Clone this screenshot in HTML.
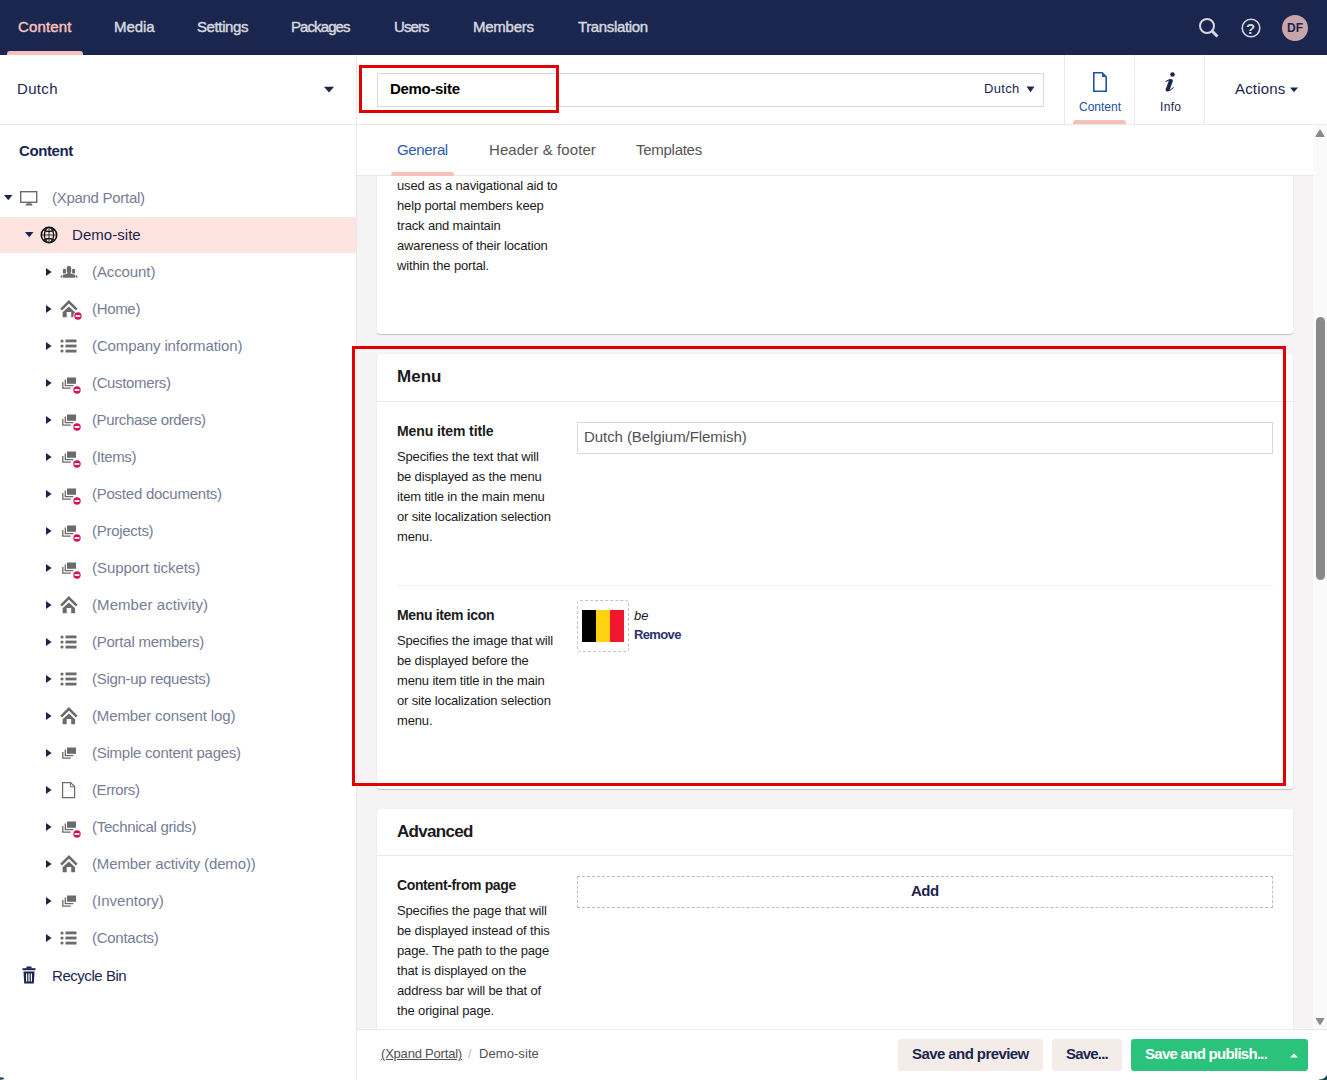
<!DOCTYPE html>
<html><head><meta charset="utf-8"><title>Umbraco</title>
<style>
html,body{margin:0;padding:0;}
body{width:1327px;height:1080px;overflow:hidden;position:relative;background:#fff;font-family:'Liberation Sans', sans-serif;}
</style></head><body>
<div style="position:absolute;left:357px;top:125px;width:956px;height:904px;background:#f5f3f4"></div>
<div style="position:absolute;left:1313px;top:125px;width:14px;height:904px;background:#fafafa"></div>
<svg style="position:absolute;left:1313px;top:125px" width="14" height="14"><path d="M3 11.5 L7 5 L11 11.5 Z" fill="#8a8a8a" stroke="#8a8a8a" stroke-width="1.2" stroke-linejoin="round"/></svg>
<svg style="position:absolute;left:1313px;top:1015px" width="14" height="14"><path d="M3.4 3.6 L10.6 3.6 L7 9.4 Z" fill="#8a8a8a" stroke="#8a8a8a" stroke-width="1.2" stroke-linejoin="round"/></svg>
<div style="position:absolute;left:1316px;top:317px;width:9px;height:263px;background:#8a8a8a;border-radius:4.5px"></div>
<div style="position:absolute;left:377px;top:120px;width:916px;height:214px;background:#fff;border-radius:3px;box-shadow:0 1px 1px rgba(0,0,0,0.2),0 0 1px rgba(0,0,0,0.1)"></div>
<div style="position:absolute;left:377px;top:354px;width:916px;height:435px;background:#fff;border-radius:3px;box-shadow:0 1px 1px rgba(0,0,0,0.2),0 0 1px rgba(0,0,0,0.1)"></div>
<div style="position:absolute;left:377px;top:401px;width:916px;height:1px;background:#e9e9eb"></div>
<div style="position:absolute;left:377px;top:809px;width:916px;height:400px;background:#fff;border-radius:3px;box-shadow:0 1px 1px rgba(0,0,0,0.2),0 0 1px rgba(0,0,0,0.1)"></div>
<div style="position:absolute;left:377px;top:855px;width:916px;height:1px;background:#e9e9eb"></div>
<div style="position:absolute;left:397px;top:176px;line-height:20px;white-space:nowrap;font-size:13px;font-weight:normal;font-style:normal;color:#1b1b1b;letter-spacing:-0.15px;">used as a navigational aid to</div>
<div style="position:absolute;left:397px;top:196px;line-height:20px;white-space:nowrap;font-size:13px;font-weight:normal;font-style:normal;color:#1b1b1b;letter-spacing:-0.15px;">help portal members keep</div>
<div style="position:absolute;left:397px;top:216px;line-height:20px;white-space:nowrap;font-size:13px;font-weight:normal;font-style:normal;color:#1b1b1b;letter-spacing:-0.15px;">track and maintain</div>
<div style="position:absolute;left:397px;top:236px;line-height:20px;white-space:nowrap;font-size:13px;font-weight:normal;font-style:normal;color:#1b1b1b;letter-spacing:-0.15px;">awareness of their location</div>
<div style="position:absolute;left:397px;top:256px;line-height:20px;white-space:nowrap;font-size:13px;font-weight:normal;font-style:normal;color:#1b1b1b;letter-spacing:-0.15px;">within the portal.</div>
<div style="position:absolute;left:397px;top:367px;line-height:20px;white-space:nowrap;font-size:17px;font-weight:bold;font-style:normal;color:#1b1b1b;letter-spacing:0.036px;">Menu</div>
<div style="position:absolute;left:397px;top:421px;line-height:20px;white-space:nowrap;font-size:14px;font-weight:bold;font-style:normal;color:#1b1b1b;letter-spacing:-0.101px;">Menu item title</div>
<div style="position:absolute;left:397px;top:447px;line-height:20px;white-space:nowrap;font-size:13px;font-weight:normal;font-style:normal;color:#1b1b1b;letter-spacing:-0.15px;">Specifies the text that will</div>
<div style="position:absolute;left:397px;top:467px;line-height:20px;white-space:nowrap;font-size:13px;font-weight:normal;font-style:normal;color:#1b1b1b;letter-spacing:-0.15px;">be displayed as the menu</div>
<div style="position:absolute;left:397px;top:487px;line-height:20px;white-space:nowrap;font-size:13px;font-weight:normal;font-style:normal;color:#1b1b1b;letter-spacing:-0.15px;">item title in the main menu</div>
<div style="position:absolute;left:397px;top:507px;line-height:20px;white-space:nowrap;font-size:13px;font-weight:normal;font-style:normal;color:#1b1b1b;letter-spacing:-0.15px;">or site localization selection</div>
<div style="position:absolute;left:397px;top:527px;line-height:20px;white-space:nowrap;font-size:13px;font-weight:normal;font-style:normal;color:#1b1b1b;letter-spacing:-0.15px;">menu.</div>
<div style="position:absolute;left:577px;top:422px;width:696px;height:32px;border:1px solid #d8d7d9;box-sizing:border-box;background:#fff"></div>
<div style="position:absolute;left:584px;top:427px;line-height:20px;white-space:nowrap;font-size:15px;font-weight:normal;font-style:normal;color:#515054;letter-spacing:-0.069px;">Dutch (Belgium/Flemish)</div>
<div style="position:absolute;left:397px;top:585px;width:876px;height:1px;background:#f0f0f1"></div>
<div style="position:absolute;left:397px;top:605px;line-height:20px;white-space:nowrap;font-size:14px;font-weight:bold;font-style:normal;color:#1b1b1b;letter-spacing:-0.339px;">Menu item icon</div>
<div style="position:absolute;left:397px;top:631px;line-height:20px;white-space:nowrap;font-size:13px;font-weight:normal;font-style:normal;color:#1b1b1b;letter-spacing:-0.15px;">Specifies the image that will</div>
<div style="position:absolute;left:397px;top:651px;line-height:20px;white-space:nowrap;font-size:13px;font-weight:normal;font-style:normal;color:#1b1b1b;letter-spacing:-0.15px;">be displayed before the</div>
<div style="position:absolute;left:397px;top:671px;line-height:20px;white-space:nowrap;font-size:13px;font-weight:normal;font-style:normal;color:#1b1b1b;letter-spacing:-0.15px;">menu item title in the main</div>
<div style="position:absolute;left:397px;top:691px;line-height:20px;white-space:nowrap;font-size:13px;font-weight:normal;font-style:normal;color:#1b1b1b;letter-spacing:-0.15px;">or site localization selection</div>
<div style="position:absolute;left:397px;top:711px;line-height:20px;white-space:nowrap;font-size:13px;font-weight:normal;font-style:normal;color:#1b1b1b;letter-spacing:-0.15px;">menu.</div>
<div style="position:absolute;left:577px;top:600px;width:52px;height:52px;border:1px dashed #c4c4c8;box-sizing:border-box;border-radius:3px"></div>
<div style="position:absolute;left:582px;top:610px;width:14px;height:32px;background:#000"></div>
<div style="position:absolute;left:596px;top:610px;width:14px;height:32px;background:#fdd30f"></div>
<div style="position:absolute;left:610px;top:610px;width:14px;height:32px;background:#f1172f"></div>
<div style="position:absolute;left:634px;top:606px;line-height:20px;white-space:nowrap;font-size:13px;font-weight:normal;font-style:italic;color:#1b1b1b;">be</div>
<div style="position:absolute;left:634px;top:625px;line-height:20px;white-space:nowrap;font-size:13px;font-weight:bold;font-style:normal;color:#27336a;letter-spacing:-0.636px;">Remove</div>
<div style="position:absolute;left:397px;top:822px;line-height:20px;white-space:nowrap;font-size:17px;font-weight:bold;font-style:normal;color:#1b1b1b;letter-spacing:-0.679px;">Advanced</div>
<div style="position:absolute;left:397px;top:875px;line-height:20px;white-space:nowrap;font-size:14px;font-weight:bold;font-style:normal;color:#1b1b1b;letter-spacing:-0.376px;">Content-from page</div>
<div style="position:absolute;left:397px;top:901px;line-height:20px;white-space:nowrap;font-size:13px;font-weight:normal;font-style:normal;color:#1b1b1b;letter-spacing:-0.15px;">Specifies the page that will</div>
<div style="position:absolute;left:397px;top:921px;line-height:20px;white-space:nowrap;font-size:13px;font-weight:normal;font-style:normal;color:#1b1b1b;letter-spacing:-0.15px;">be displayed instead of this</div>
<div style="position:absolute;left:397px;top:941px;line-height:20px;white-space:nowrap;font-size:13px;font-weight:normal;font-style:normal;color:#1b1b1b;letter-spacing:-0.15px;">page. The path to the page</div>
<div style="position:absolute;left:397px;top:961px;line-height:20px;white-space:nowrap;font-size:13px;font-weight:normal;font-style:normal;color:#1b1b1b;letter-spacing:-0.15px;">that is displayed on the</div>
<div style="position:absolute;left:397px;top:981px;line-height:20px;white-space:nowrap;font-size:13px;font-weight:normal;font-style:normal;color:#1b1b1b;letter-spacing:-0.15px;">address bar will be that of</div>
<div style="position:absolute;left:397px;top:1001px;line-height:20px;white-space:nowrap;font-size:13px;font-weight:normal;font-style:normal;color:#1b1b1b;letter-spacing:-0.15px;">the original page.</div>
<div style="position:absolute;left:577px;top:876px;width:696px;height:32px;border:1px dashed #bdbdc2;box-sizing:border-box"></div>
<div style="position:absolute;left:911px;top:881px;line-height:20px;white-space:nowrap;font-size:15px;font-weight:bold;font-style:normal;color:#1b264f;letter-spacing:-0.536px;">Add</div>
<div style="position:absolute;left:357px;top:125px;width:956px;height:50px;background:#fff"></div>
<div style="position:absolute;left:357px;top:175px;width:956px;height:1px;background:#e9e9eb"></div>
<div style="position:absolute;left:397px;top:140px;line-height:20px;white-space:nowrap;font-size:15px;font-weight:normal;font-style:normal;color:#2e5aac;letter-spacing:-0.362px;">General</div>
<div style="position:absolute;left:391px;top:172px;width:63px;height:4px;background:#f5c1bc;border-radius:3px 3px 0 0"></div>
<div style="position:absolute;left:489px;top:140px;line-height:20px;white-space:nowrap;font-size:15px;font-weight:normal;font-style:normal;color:#555;letter-spacing:0.064px;">Header &amp; footer</div>
<div style="position:absolute;left:636px;top:140px;line-height:20px;white-space:nowrap;font-size:15px;font-weight:normal;font-style:normal;color:#555;letter-spacing:-0.272px;">Templates</div>
<div style="position:absolute;left:357px;top:1029px;width:970px;height:51px;background:#fff"></div>
<div style="position:absolute;left:357px;top:1029px;width:970px;height:1px;background:#e9e9eb"></div>
<div style="position:absolute;left:381px;top:1044px;line-height:20px;white-space:nowrap;font-size:13px;font-weight:normal;font-style:normal;color:#515054;text-decoration:underline;letter-spacing:-0.202px;">(Xpand Portal)</div>
<div style="position:absolute;left:468px;top:1044px;line-height:20px;white-space:nowrap;font-size:13px;font-weight:normal;font-style:normal;color:#bbb;">/</div>
<div style="position:absolute;left:479px;top:1044px;line-height:20px;white-space:nowrap;font-size:13px;font-weight:normal;font-style:normal;color:#515054;letter-spacing:0.069px;">Demo-site</div>
<div style="position:absolute;left:898px;top:1039px;width:145px;height:32px;background:#f3ece8;border-radius:3px"></div>
<div style="position:absolute;left:912px;top:1044px;line-height:20px;white-space:nowrap;font-size:15px;font-weight:bold;font-style:normal;color:#1b264f;letter-spacing:-0.574px;">Save and preview</div>
<div style="position:absolute;left:1052px;top:1039px;width:70px;height:32px;background:#f3ece8;border-radius:3px"></div>
<div style="position:absolute;left:1066px;top:1044px;line-height:20px;white-space:nowrap;font-size:15px;font-weight:bold;font-style:normal;color:#1b264f;letter-spacing:-0.808px;">Save...</div>
<div style="position:absolute;left:1131px;top:1039px;width:177px;height:32px;background:#2bc37c;border-radius:3px"></div>
<div style="position:absolute;left:1145px;top:1044px;line-height:20px;white-space:nowrap;font-size:15px;font-weight:bold;font-style:normal;color:#fff;letter-spacing:-0.715px;">Save and publish...</div>
<svg style="position:absolute;left:1289px;top:1052px" width="10" height="6"><path d="M1 5.5 L5 1.5 L9 5.5 Z" fill="#fff"/></svg>
<div style="position:absolute;left:0px;top:0px;width:1327px;height:55px;background:#1b264f"></div>
<div style="position:absolute;left:18px;top:17px;line-height:20px;white-space:nowrap;font-size:15px;font-weight:normal;font-style:normal;color:#f5c1bc;-webkit-text-stroke:0.45px currentColor;letter-spacing:0.159px;">Content</div>
<div style="position:absolute;left:114px;top:17px;line-height:20px;white-space:nowrap;font-size:15px;font-weight:normal;font-style:normal;color:#d5d6df;-webkit-text-stroke:0.45px currentColor;letter-spacing:-0.090px;">Media</div>
<div style="position:absolute;left:197px;top:17px;line-height:20px;white-space:nowrap;font-size:15px;font-weight:normal;font-style:normal;color:#d5d6df;-webkit-text-stroke:0.45px currentColor;letter-spacing:-0.386px;">Settings</div>
<div style="position:absolute;left:291px;top:17px;line-height:20px;white-space:nowrap;font-size:15px;font-weight:normal;font-style:normal;color:#d5d6df;-webkit-text-stroke:0.45px currentColor;letter-spacing:-0.911px;">Packages</div>
<div style="position:absolute;left:394px;top:17px;line-height:20px;white-space:nowrap;font-size:15px;font-weight:normal;font-style:normal;color:#d5d6df;-webkit-text-stroke:0.45px currentColor;letter-spacing:-0.918px;">Users</div>
<div style="position:absolute;left:473px;top:17px;line-height:20px;white-space:nowrap;font-size:15px;font-weight:normal;font-style:normal;color:#d5d6df;-webkit-text-stroke:0.45px currentColor;letter-spacing:-0.253px;">Members</div>
<div style="position:absolute;left:578px;top:17px;line-height:20px;white-space:nowrap;font-size:15px;font-weight:normal;font-style:normal;color:#d5d6df;-webkit-text-stroke:0.45px currentColor;letter-spacing:-0.366px;">Translation</div>
<div style="position:absolute;left:7px;top:51px;width:76px;height:4px;background:#f5c1bc;border-radius:3px 3px 0 0"></div>
<svg style="position:absolute;left:1196px;top:15px" width="26" height="26"><circle cx="11" cy="11" r="7" fill="none" stroke="#d5d6df" stroke-width="2"/><path d="M16 16 L21.5 21.5" stroke="#d5d6df" stroke-width="3" stroke-linecap="butt"/></svg>
<svg style="position:absolute;left:1240px;top:17px" width="22" height="22"><circle cx="11" cy="11" r="8.8" fill="none" stroke="#d5d6df" stroke-width="1.6"/></svg>
<div style="position:absolute;left:1246px;top:19px;line-height:20px;white-space:nowrap;font-size:15px;font-weight:bold;font-style:normal;color:#d5d6df;">?</div>
<div style="position:absolute;left:1282px;top:15px;width:26px;height:26px;background:#c9a4a8;border-radius:50%"></div>
<div style="position:absolute;left:1287px;top:18px;line-height:20px;white-space:nowrap;font-size:12px;font-weight:bold;font-style:normal;color:#1b264f;letter-spacing:0.000px;">DF</div>
<div style="position:absolute;left:357px;top:55px;width:970px;height:69px;background:#fff"></div>
<div style="position:absolute;left:357px;top:124px;width:970px;height:1px;background:#e9e9eb"></div>
<div style="position:absolute;left:377px;top:73px;width:667px;height:34px;border:1px solid #d8d7d9;box-sizing:border-box"></div>
<div style="position:absolute;left:390px;top:79px;line-height:20px;white-space:nowrap;font-size:15px;font-weight:bold;font-style:normal;color:#000;letter-spacing:-0.316px;">Demo-site</div>
<div style="position:absolute;left:984px;top:79px;line-height:20px;white-space:nowrap;font-size:13px;font-weight:normal;font-style:normal;color:#1b264f;letter-spacing:0.308px;">Dutch</div>
<svg style="position:absolute;left:1026px;top:86px" width="9" height="7"><path d="M0.5 0.5 L8.5 0.5 L4.5 6.3 Z" fill="#1b264f"/></svg>
<div style="position:absolute;left:1064px;top:55px;width:1px;height:69px;background:#e9e9eb"></div>
<div style="position:absolute;left:1134px;top:55px;width:1px;height:69px;background:#e9e9eb"></div>
<div style="position:absolute;left:1204px;top:55px;width:1px;height:69px;background:#e9e9eb"></div>
<svg style="position:absolute;left:1092px;top:71px" width="16" height="22"><path d="M1.8 1.8 H10.2 L14.2 5.8 V20.2 H1.8 Z" fill="none" stroke="#2152a3" stroke-width="1.6" stroke-linejoin="miter"/><path d="M10 2 L10 6 L14 6 Z" fill="#2152a3"/></svg>
<div style="position:absolute;left:1079px;top:97px;line-height:20px;white-space:nowrap;font-size:12px;font-weight:normal;font-style:normal;color:#2152a3;letter-spacing:-0.005px;">Content</div>
<div style="position:absolute;left:1073px;top:120px;width:53px;height:4px;background:#f5c1bc;border-radius:3px 3px 0 0"></div>
<svg style="position:absolute;left:1158px;top:68px" width="24" height="28"><circle cx="14.5" cy="6.5" r="2.3" fill="#1b264f"/><path d="M7.2 13.8 C8.6 12.2 10.3 11 12.8 10.9 C14.6 10.9 15.1 12 14.7 13.4 L11.6 21.9 L15.6 19.1 L16 19.5 C13.8 21.9 11.6 23.4 9.2 23.4 C7.8 23.4 7.4 22.4 7.7 21.3 L10.9 12.6 L7.5 14.2 Z" fill="#1b264f"/></svg>
<div style="position:absolute;left:1160px;top:97px;line-height:20px;white-space:nowrap;font-size:12px;font-weight:normal;font-style:normal;color:#1b264f;letter-spacing:0.328px;">Info</div>
<div style="position:absolute;left:1235px;top:79px;line-height:20px;white-space:nowrap;font-size:15px;font-weight:normal;font-style:normal;color:#1b264f;letter-spacing:0.183px;">Actions</div>
<svg style="position:absolute;left:1290px;top:87px" width="8" height="6"><path d="M0 0.5 L8 0.5 L4 5.3 Z" fill="#1b264f"/></svg>
<div style="position:absolute;left:0px;top:55px;width:356px;height:1025px;background:#fff"></div>
<div style="position:absolute;left:356px;top:55px;width:1px;height:1025px;background:#e9e9eb"></div>
<div style="position:absolute;left:0px;top:124px;width:356px;height:1px;background:#e9e9eb"></div>
<div style="position:absolute;left:17px;top:79px;line-height:20px;white-space:nowrap;font-size:15px;font-weight:normal;font-style:normal;color:#1b264f;letter-spacing:0.328px;">Dutch</div>
<svg style="position:absolute;left:324px;top:86px" width="10" height="7"><path d="M0 0.8 L10 0.8 L5 6.5 Z" fill="#1b264f"/></svg>
<div style="position:absolute;left:19px;top:141px;line-height:20px;white-space:nowrap;font-size:15px;font-weight:bold;font-style:normal;color:#1b264f;letter-spacing:-0.409px;">Content</div>
<svg style="position:absolute;left:4px;top:195px" width="9" height="6"><path d="M0 0 L8.5 0 L4.25 5.2 Z" fill="#1b264f"/></svg>
<svg style="position:absolute;left:20px;top:191px" width="18" height="15"><rect x="0.7" y="0.7" width="16" height="10.6" fill="none" stroke="#6b6b6b" stroke-width="1.4"/><path d="M5.2 14.6 L6.8 12.2 H11.2 L12.8 14.6 Z" fill="#6b6b6b"/></svg>
<div style="position:absolute;left:52px;top:188px;line-height:20px;white-space:nowrap;font-size:15px;font-weight:normal;font-style:normal;color:#767d95;letter-spacing:-0.286px;">(Xpand Portal)</div>
<div style="position:absolute;left:0px;top:217px;width:356px;height:36px;background:#fde4e1"></div>
<svg style="position:absolute;left:25px;top:232px" width="9" height="6"><path d="M0 0 L8.5 0 L4.25 5.2 Z" fill="#1b264f"/></svg>
<svg style="position:absolute;left:40px;top:226px" width="18" height="18"><circle cx="9" cy="9" r="7.7" fill="none" stroke="#111" stroke-width="1.6"/><ellipse cx="9" cy="9" rx="4.6" ry="7.7" fill="none" stroke="#111" stroke-width="1.3"/><path d="M9 1.4 V16.6 M1.6 9 H16.4" stroke="#222" stroke-width="0.9"/><path d="M3.6 3.4 Q9 7.6 14.4 3.4 M3.6 14.6 Q9 10.4 14.4 14.6" fill="none" stroke="#111" stroke-width="1.3"/></svg>
<div style="position:absolute;left:72px;top:225px;line-height:20px;white-space:nowrap;font-size:15px;font-weight:normal;font-style:normal;color:#1b264f;letter-spacing:0.043px;">Demo-site</div>
<svg style="position:absolute;left:46px;top:268px" width="6" height="9"><path d="M0 0 L5.6 4 L0 8 Z" fill="#1b264f"/></svg>
<svg style="position:absolute;left:60px;top:266px" width="18" height="13"><rect x="6.8" y="0.1" width="4.4" height="7" rx="1.6" fill="#6b6b6b"/><path d="M7.6 6.6 H10.4 L10.6 7.6 L15 8.6 V11.8 H3 V8.6 L7.4 7.6 Z" fill="#6b6b6b"/><rect x="2.9" y="2.8" width="3" height="5" rx="1.1" fill="#6b6b6b"/><rect x="12.1" y="2.8" width="3" height="5" rx="1.1" fill="#6b6b6b"/><path d="M0.1 11.4 L1.3 9.3 L2.4 9 V11.4 Z" fill="#6b6b6b"/><path d="M17.9 11.4 L16.7 9.3 L15.6 9 V11.4 Z" fill="#6b6b6b"/><path d="M5.9 7.6 L3 8.4 M12.1 7.6 L15 8.4" stroke="#fff" stroke-width="0.6"/></svg>
<div style="position:absolute;left:92px;top:262px;line-height:20px;white-space:nowrap;font-size:15px;font-weight:normal;font-style:normal;color:#767d95;letter-spacing:-0.100px;">(Account)</div>
<svg style="position:absolute;left:46px;top:305px" width="6" height="9"><path d="M0 0 L5.6 4 L0 8 Z" fill="#1b264f"/></svg>
<svg style="position:absolute;left:60px;top:300px" width="18" height="18"><path d="M1.1 9.7 L8.9 1.9 L16.7 9.7" fill="none" stroke="#6b6b6b" stroke-width="2.6"/><path d="M8.9 6.4 L15.1 12.2 V17.3 H11.2 V11.9 H6.7 V17.3 H2.6 V12.2 Z" fill="#6b6b6b"/></svg>
<svg style="position:absolute;left:72.5px;top:311px" width="10" height="10"><circle cx="5" cy="5" r="4.6" fill="#fff"/><circle cx="5" cy="5" r="3.7" fill="#d9134a"/><rect x="2.6" y="4.1" width="4.8" height="1.8" fill="#fff"/></svg>
<div style="position:absolute;left:92px;top:299px;line-height:20px;white-space:nowrap;font-size:15px;font-weight:normal;font-style:normal;color:#767d95;letter-spacing:-0.323px;">(Home)</div>
<svg style="position:absolute;left:46px;top:342px" width="6" height="9"><path d="M0 0 L5.6 4 L0 8 Z" fill="#1b264f"/></svg>
<svg style="position:absolute;left:60px;top:339px" width="17" height="14"><circle cx="2" cy="2" r="1.6" fill="#6b6b6b"/><circle cx="2" cy="7" r="1.6" fill="#6b6b6b"/><circle cx="2" cy="12" r="1.6" fill="#6b6b6b"/><rect x="5.5" y="0.5" width="11" height="2.8" fill="#6b6b6b"/><rect x="5.5" y="5.6" width="11" height="2.8" fill="#6b6b6b"/><rect x="5.5" y="10.7" width="11" height="2.8" fill="#6b6b6b"/></svg>
<div style="position:absolute;left:92px;top:336px;line-height:20px;white-space:nowrap;font-size:15px;font-weight:normal;font-style:normal;color:#767d95;letter-spacing:-0.108px;">(Company information)</div>
<svg style="position:absolute;left:46px;top:379px" width="6" height="9"><path d="M0 0 L5.6 4 L0 8 Z" fill="#1b264f"/></svg>
<svg style="position:absolute;left:62px;top:377px" width="15" height="12"><rect x="5" y="0.5" width="9" height="6.3" fill="#6b6b6b"/><path d="M3.3 2.5 V8.6 H11.3" fill="none" stroke="#6b6b6b" stroke-width="1.3"/><path d="M0.8 5 V11.2 H8.8" fill="none" stroke="#6b6b6b" stroke-width="1.3"/></svg>
<svg style="position:absolute;left:72.4px;top:385px" width="10" height="10"><circle cx="5" cy="5" r="4.6" fill="#fff"/><circle cx="5" cy="5" r="3.7" fill="#d9134a"/><rect x="2.6" y="4.1" width="4.8" height="1.8" fill="#fff"/></svg>
<div style="position:absolute;left:92px;top:373px;line-height:20px;white-space:nowrap;font-size:15px;font-weight:normal;font-style:normal;color:#767d95;letter-spacing:-0.352px;">(Customers)</div>
<svg style="position:absolute;left:46px;top:416px" width="6" height="9"><path d="M0 0 L5.6 4 L0 8 Z" fill="#1b264f"/></svg>
<svg style="position:absolute;left:62px;top:414px" width="15" height="12"><rect x="5" y="0.5" width="9" height="6.3" fill="#6b6b6b"/><path d="M3.3 2.5 V8.6 H11.3" fill="none" stroke="#6b6b6b" stroke-width="1.3"/><path d="M0.8 5 V11.2 H8.8" fill="none" stroke="#6b6b6b" stroke-width="1.3"/></svg>
<svg style="position:absolute;left:72.4px;top:422px" width="10" height="10"><circle cx="5" cy="5" r="4.6" fill="#fff"/><circle cx="5" cy="5" r="3.7" fill="#d9134a"/><rect x="2.6" y="4.1" width="4.8" height="1.8" fill="#fff"/></svg>
<div style="position:absolute;left:92px;top:410px;line-height:20px;white-space:nowrap;font-size:15px;font-weight:normal;font-style:normal;color:#767d95;letter-spacing:-0.378px;">(Purchase orders)</div>
<svg style="position:absolute;left:46px;top:453px" width="6" height="9"><path d="M0 0 L5.6 4 L0 8 Z" fill="#1b264f"/></svg>
<svg style="position:absolute;left:62px;top:451px" width="15" height="12"><rect x="5" y="0.5" width="9" height="6.3" fill="#6b6b6b"/><path d="M3.3 2.5 V8.6 H11.3" fill="none" stroke="#6b6b6b" stroke-width="1.3"/><path d="M0.8 5 V11.2 H8.8" fill="none" stroke="#6b6b6b" stroke-width="1.3"/></svg>
<svg style="position:absolute;left:72.4px;top:459px" width="10" height="10"><circle cx="5" cy="5" r="4.6" fill="#fff"/><circle cx="5" cy="5" r="3.7" fill="#d9134a"/><rect x="2.6" y="4.1" width="4.8" height="1.8" fill="#fff"/></svg>
<div style="position:absolute;left:92px;top:447px;line-height:20px;white-space:nowrap;font-size:15px;font-weight:normal;font-style:normal;color:#767d95;letter-spacing:-0.362px;">(Items)</div>
<svg style="position:absolute;left:46px;top:490px" width="6" height="9"><path d="M0 0 L5.6 4 L0 8 Z" fill="#1b264f"/></svg>
<svg style="position:absolute;left:62px;top:488px" width="15" height="12"><rect x="5" y="0.5" width="9" height="6.3" fill="#6b6b6b"/><path d="M3.3 2.5 V8.6 H11.3" fill="none" stroke="#6b6b6b" stroke-width="1.3"/><path d="M0.8 5 V11.2 H8.8" fill="none" stroke="#6b6b6b" stroke-width="1.3"/></svg>
<svg style="position:absolute;left:72.4px;top:496px" width="10" height="10"><circle cx="5" cy="5" r="4.6" fill="#fff"/><circle cx="5" cy="5" r="3.7" fill="#d9134a"/><rect x="2.6" y="4.1" width="4.8" height="1.8" fill="#fff"/></svg>
<div style="position:absolute;left:92px;top:484px;line-height:20px;white-space:nowrap;font-size:15px;font-weight:normal;font-style:normal;color:#767d95;letter-spacing:-0.243px;">(Posted documents)</div>
<svg style="position:absolute;left:46px;top:527px" width="6" height="9"><path d="M0 0 L5.6 4 L0 8 Z" fill="#1b264f"/></svg>
<svg style="position:absolute;left:62px;top:525px" width="15" height="12"><rect x="5" y="0.5" width="9" height="6.3" fill="#6b6b6b"/><path d="M3.3 2.5 V8.6 H11.3" fill="none" stroke="#6b6b6b" stroke-width="1.3"/><path d="M0.8 5 V11.2 H8.8" fill="none" stroke="#6b6b6b" stroke-width="1.3"/></svg>
<svg style="position:absolute;left:72.4px;top:533px" width="10" height="10"><circle cx="5" cy="5" r="4.6" fill="#fff"/><circle cx="5" cy="5" r="3.7" fill="#d9134a"/><rect x="2.6" y="4.1" width="4.8" height="1.8" fill="#fff"/></svg>
<div style="position:absolute;left:92px;top:521px;line-height:20px;white-space:nowrap;font-size:15px;font-weight:normal;font-style:normal;color:#767d95;letter-spacing:-0.287px;">(Projects)</div>
<svg style="position:absolute;left:46px;top:564px" width="6" height="9"><path d="M0 0 L5.6 4 L0 8 Z" fill="#1b264f"/></svg>
<svg style="position:absolute;left:62px;top:562px" width="15" height="12"><rect x="5" y="0.5" width="9" height="6.3" fill="#6b6b6b"/><path d="M3.3 2.5 V8.6 H11.3" fill="none" stroke="#6b6b6b" stroke-width="1.3"/><path d="M0.8 5 V11.2 H8.8" fill="none" stroke="#6b6b6b" stroke-width="1.3"/></svg>
<svg style="position:absolute;left:72.4px;top:570px" width="10" height="10"><circle cx="5" cy="5" r="4.6" fill="#fff"/><circle cx="5" cy="5" r="3.7" fill="#d9134a"/><rect x="2.6" y="4.1" width="4.8" height="1.8" fill="#fff"/></svg>
<div style="position:absolute;left:92px;top:558px;line-height:20px;white-space:nowrap;font-size:15px;font-weight:normal;font-style:normal;color:#767d95;letter-spacing:-0.057px;">(Support tickets)</div>
<svg style="position:absolute;left:46px;top:601px" width="6" height="9"><path d="M0 0 L5.6 4 L0 8 Z" fill="#1b264f"/></svg>
<svg style="position:absolute;left:60px;top:596px" width="18" height="18"><path d="M1.1 9.7 L8.9 1.9 L16.7 9.7" fill="none" stroke="#6b6b6b" stroke-width="2.6"/><path d="M8.9 6.4 L15.1 12.2 V17.3 H11.2 V11.9 H6.7 V17.3 H2.6 V12.2 Z" fill="#6b6b6b"/></svg>
<div style="position:absolute;left:92px;top:595px;line-height:20px;white-space:nowrap;font-size:15px;font-weight:normal;font-style:normal;color:#767d95;letter-spacing:0.068px;">(Member activity)</div>
<svg style="position:absolute;left:46px;top:638px" width="6" height="9"><path d="M0 0 L5.6 4 L0 8 Z" fill="#1b264f"/></svg>
<svg style="position:absolute;left:60px;top:635px" width="17" height="14"><circle cx="2" cy="2" r="1.6" fill="#6b6b6b"/><circle cx="2" cy="7" r="1.6" fill="#6b6b6b"/><circle cx="2" cy="12" r="1.6" fill="#6b6b6b"/><rect x="5.5" y="0.5" width="11" height="2.8" fill="#6b6b6b"/><rect x="5.5" y="5.6" width="11" height="2.8" fill="#6b6b6b"/><rect x="5.5" y="10.7" width="11" height="2.8" fill="#6b6b6b"/></svg>
<div style="position:absolute;left:92px;top:632px;line-height:20px;white-space:nowrap;font-size:15px;font-weight:normal;font-style:normal;color:#767d95;letter-spacing:-0.244px;">(Portal members)</div>
<svg style="position:absolute;left:46px;top:675px" width="6" height="9"><path d="M0 0 L5.6 4 L0 8 Z" fill="#1b264f"/></svg>
<svg style="position:absolute;left:60px;top:672px" width="17" height="14"><circle cx="2" cy="2" r="1.6" fill="#6b6b6b"/><circle cx="2" cy="7" r="1.6" fill="#6b6b6b"/><circle cx="2" cy="12" r="1.6" fill="#6b6b6b"/><rect x="5.5" y="0.5" width="11" height="2.8" fill="#6b6b6b"/><rect x="5.5" y="5.6" width="11" height="2.8" fill="#6b6b6b"/><rect x="5.5" y="10.7" width="11" height="2.8" fill="#6b6b6b"/></svg>
<div style="position:absolute;left:92px;top:669px;line-height:20px;white-space:nowrap;font-size:15px;font-weight:normal;font-style:normal;color:#767d95;letter-spacing:-0.289px;">(Sign-up requests)</div>
<svg style="position:absolute;left:46px;top:712px" width="6" height="9"><path d="M0 0 L5.6 4 L0 8 Z" fill="#1b264f"/></svg>
<svg style="position:absolute;left:60px;top:707px" width="18" height="18"><path d="M1.1 9.7 L8.9 1.9 L16.7 9.7" fill="none" stroke="#6b6b6b" stroke-width="2.6"/><path d="M8.9 6.4 L15.1 12.2 V17.3 H11.2 V11.9 H6.7 V17.3 H2.6 V12.2 Z" fill="#6b6b6b"/></svg>
<div style="position:absolute;left:92px;top:706px;line-height:20px;white-space:nowrap;font-size:15px;font-weight:normal;font-style:normal;color:#767d95;letter-spacing:-0.132px;">(Member consent log)</div>
<svg style="position:absolute;left:46px;top:749px" width="6" height="9"><path d="M0 0 L5.6 4 L0 8 Z" fill="#1b264f"/></svg>
<svg style="position:absolute;left:62px;top:747px" width="15" height="12"><rect x="5" y="0.5" width="9" height="6.3" fill="#6b6b6b"/><path d="M3.3 2.5 V8.6 H11.3" fill="none" stroke="#6b6b6b" stroke-width="1.3"/><path d="M0.8 5 V11.2 H8.8" fill="none" stroke="#6b6b6b" stroke-width="1.3"/></svg>
<div style="position:absolute;left:92px;top:743px;line-height:20px;white-space:nowrap;font-size:15px;font-weight:normal;font-style:normal;color:#767d95;letter-spacing:-0.245px;">(Simple content pages)</div>
<svg style="position:absolute;left:46px;top:786px" width="6" height="9"><path d="M0 0 L5.6 4 L0 8 Z" fill="#1b264f"/></svg>
<svg style="position:absolute;left:62px;top:782px" width="14" height="17"><path d="M0.6 0.6 H8.6 L12.6 4.6 V15.6 H0.6 Z" fill="none" stroke="#6b6b6b" stroke-width="1.2"/><path d="M8.4 0.8 V4.8 H12.4" fill="none" stroke="#6b6b6b" stroke-width="1"/></svg>
<div style="position:absolute;left:92px;top:780px;line-height:20px;white-space:nowrap;font-size:15px;font-weight:normal;font-style:normal;color:#767d95;letter-spacing:-0.418px;">(Errors)</div>
<svg style="position:absolute;left:46px;top:823px" width="6" height="9"><path d="M0 0 L5.6 4 L0 8 Z" fill="#1b264f"/></svg>
<svg style="position:absolute;left:62px;top:821px" width="15" height="12"><rect x="5" y="0.5" width="9" height="6.3" fill="#6b6b6b"/><path d="M3.3 2.5 V8.6 H11.3" fill="none" stroke="#6b6b6b" stroke-width="1.3"/><path d="M0.8 5 V11.2 H8.8" fill="none" stroke="#6b6b6b" stroke-width="1.3"/></svg>
<svg style="position:absolute;left:72.4px;top:829px" width="10" height="10"><circle cx="5" cy="5" r="4.6" fill="#fff"/><circle cx="5" cy="5" r="3.7" fill="#d9134a"/><rect x="2.6" y="4.1" width="4.8" height="1.8" fill="#fff"/></svg>
<div style="position:absolute;left:92px;top:817px;line-height:20px;white-space:nowrap;font-size:15px;font-weight:normal;font-style:normal;color:#767d95;letter-spacing:-0.301px;">(Technical grids)</div>
<svg style="position:absolute;left:46px;top:860px" width="6" height="9"><path d="M0 0 L5.6 4 L0 8 Z" fill="#1b264f"/></svg>
<svg style="position:absolute;left:60px;top:855px" width="18" height="18"><path d="M1.1 9.7 L8.9 1.9 L16.7 9.7" fill="none" stroke="#6b6b6b" stroke-width="2.6"/><path d="M8.9 6.4 L15.1 12.2 V17.3 H11.2 V11.9 H6.7 V17.3 H2.6 V12.2 Z" fill="#6b6b6b"/></svg>
<div style="position:absolute;left:92px;top:854px;line-height:20px;white-space:nowrap;font-size:15px;font-weight:normal;font-style:normal;color:#767d95;letter-spacing:-0.126px;">(Member activity (demo))</div>
<svg style="position:absolute;left:46px;top:897px" width="6" height="9"><path d="M0 0 L5.6 4 L0 8 Z" fill="#1b264f"/></svg>
<svg style="position:absolute;left:62px;top:895px" width="15" height="12"><rect x="5" y="0.5" width="9" height="6.3" fill="#6b6b6b"/><path d="M3.3 2.5 V8.6 H11.3" fill="none" stroke="#6b6b6b" stroke-width="1.3"/><path d="M0.8 5 V11.2 H8.8" fill="none" stroke="#6b6b6b" stroke-width="1.3"/></svg>
<div style="position:absolute;left:92px;top:891px;line-height:20px;white-space:nowrap;font-size:15px;font-weight:normal;font-style:normal;color:#767d95;letter-spacing:0.010px;">(Inventory)</div>
<svg style="position:absolute;left:46px;top:934px" width="6" height="9"><path d="M0 0 L5.6 4 L0 8 Z" fill="#1b264f"/></svg>
<svg style="position:absolute;left:60px;top:931px" width="17" height="14"><circle cx="2" cy="2" r="1.6" fill="#6b6b6b"/><circle cx="2" cy="7" r="1.6" fill="#6b6b6b"/><circle cx="2" cy="12" r="1.6" fill="#6b6b6b"/><rect x="5.5" y="0.5" width="11" height="2.8" fill="#6b6b6b"/><rect x="5.5" y="5.6" width="11" height="2.8" fill="#6b6b6b"/><rect x="5.5" y="10.7" width="11" height="2.8" fill="#6b6b6b"/></svg>
<div style="position:absolute;left:92px;top:928px;line-height:20px;white-space:nowrap;font-size:15px;font-weight:normal;font-style:normal;color:#767d95;letter-spacing:-0.265px;">(Contacts)</div>
<svg style="position:absolute;left:22px;top:966px" width="14" height="18"><rect x="0.5" y="2.2" width="13" height="2" fill="#1b264f"/><rect x="4.5" y="0.5" width="5" height="2" fill="#1b264f"/><path d="M1.5 5.5 H12.5 L11.8 17.5 H2.2 Z" fill="#1b264f"/><rect x="4" y="7.5" width="1.2" height="8" fill="#fff"/><rect x="6.4" y="7.5" width="1.2" height="8" fill="#fff"/><rect x="8.8" y="7.5" width="1.2" height="8" fill="#fff"/></svg>
<div style="position:absolute;left:52px;top:966px;line-height:20px;white-space:nowrap;font-size:15px;font-weight:normal;font-style:normal;color:#1b264f;letter-spacing:-0.450px;">Recycle Bin</div>
<div style="position:absolute;left:352px;top:346px;width:934px;height:440px;border:3px solid #e30000;box-sizing:border-box"></div>
<div style="position:absolute;left:359px;top:65px;width:200px;height:48px;border:3px solid #e30000;box-sizing:border-box"></div>
<svg style="position:absolute;left:0;top:1074px" width="6" height="6"><ellipse cx="0.5" cy="4.5" rx="3.5" ry="1.2" fill="#1d4a5a"/></svg>
<svg style="position:absolute;left:1319px;top:1072px" width="8" height="8"><path d="M0 7.5 C3 7.5 6 6 8 3 V8 H0 Z" fill="#1d4a5a"/></svg>
</body></html>
